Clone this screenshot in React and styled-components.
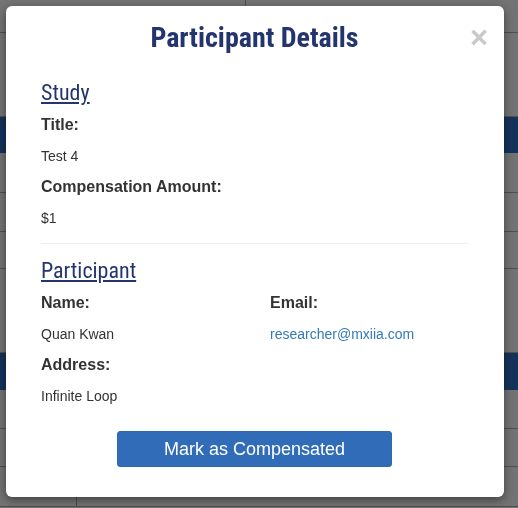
import React from 'react';
import styled, { createGlobalStyle } from 'styled-components';

const GlobalStyle = createGlobalStyle`
  html, body {
    margin: 0;
    padding: 0;
    background: #737373;
  }
  * {
    box-sizing: border-box;
  }
`;

// rows of the table page that sits under the dimmed overlay
const bgRows = [
  { h: 33, split: 246 },
  { h: 84 },
  { h: 36, band: true },
  { h: 40 },
  { h: 39 },
  { h: 37 },
  { h: 84 },
  { h: 37, band: true },
  { h: 39 },
  { h: 38 },
  { h: 40, split: 77 },
];

const App = () => {
  return (
    <>
      <GlobalStyle />
      <Page>
        {bgRows.map((row, i) => (
          <BgRow key={i} $h={row.h} $band={row.band}>
            {row.split && <BgCell style={{ width: row.split }} />}
          </BgRow>
        ))}
      </Page>

      <Modal>
        <Close aria-label="Close">×</Close>
        <Title>Participant Details</Title>

        <Body>
          <SectionHeading>Study</SectionHeading>
          <Label>Title:</Label>
          <Value>Test 4</Value>
          <Label>Compensation Amount:</Label>
          <Value>$1</Value>

          <Divider />

          <SectionHeading>Participant</SectionHeading>
          <Grid>
            <div>
              <Label>Name:</Label>
              <Value>Quan Kwan</Value>
            </div>
            <div>
              <Label>Email:</Label>
              <Value>
                <EmailLink href="#">researcher@mxiia.com</EmailLink>
              </Value>
            </div>
            <div>
              <Label>Address:</Label>
              <Value>Infinite Loop</Value>
            </div>
          </Grid>

          <Footer>
            <PrimaryButton>Mark as Compensated</PrimaryButton>
          </Footer>
        </Body>
      </Modal>
    </>
  );
};

const Page = styled.div`
  display: flex;
  flex-direction: column;
  height: 508px;
  overflow: hidden;
`;

const BgRow = styled.div`
  display: flex;
  flex: none;
  height: ${(p) => p.$h}px;
  background: ${(p) => (p.$band ? '#15325a' : 'transparent')};
  border-bottom: ${(p) => (p.$band ? 'none' : '1px solid #4f4f4f')};
`;

const BgCell = styled.div`
  border-right: 1px solid #4f4f4f;
`;

const Modal = styled.div`
  position: fixed;
  top: 6px;
  left: 6px;
  width: 498px;
  height: 491px;
  background: #fff;
  border-radius: 6px;
  box-shadow: 0 3px 10px rgba(0, 0, 0, 0.45);
  padding: 17px 36px 30px 35px;
  font-family: "Liberation Sans", Arial, sans-serif;
  color: #333;
`;

const Close = styled.button`
  position: absolute;
  top: 16px;
  right: 16px;
  padding: 0;
  border: 0;
  background: none;
  font-family: "Liberation Sans", Arial, sans-serif;
  font-size: 31px;
  font-weight: bold;
  line-height: 1;
  color: #c9c9c9;
  cursor: pointer;
`;

const Title = styled.h4`
  margin: 0;
  text-align: center;
  font-family: "Roboto Condensed", "Liberation Sans Narrow", Roboto, sans-serif;
  font-size: 28px;
  font-weight: 700;
  line-height: 1.1;
  color: #24346f;
`;

const Body = styled.div`
  display: flex;
  flex-direction: column;
  margin-top: 27px;
`;

const SectionHeading = styled.h5`
  align-self: flex-start;
  margin: 0 0 10px;
  font-family: "Roboto Condensed", "Liberation Sans Narrow", Roboto, sans-serif;
  font-size: 22px;
  font-weight: 400;
  line-height: 1.1;
  color: #24346f;
  text-decoration: underline;
  text-decoration-thickness: 2px;
  text-underline-offset: 2px;
`;

const Label = styled.div`
  font-size: 16px;
  font-weight: bold;
  line-height: 20px;
  margin-bottom: 11px;
`;

const Value = styled.div`
  font-size: 14px;
  line-height: 20px;
  margin-bottom: 11px;
`;

const EmailLink = styled.a`
  color: #337ab7;
  text-decoration: none;
`;

const Divider = styled.hr`
  width: 100%;
  margin: 4px 0 15px;
  border: 0;
  border-top: 1px solid #eee;
`;

const Grid = styled.div`
  display: grid;
  grid-template-columns: 229px 1fr;
`;

const Footer = styled.div`
  display: flex;
  justify-content: center;
  margin-top: 14px;
`;

const PrimaryButton = styled.button`
  width: 275px;
  height: 36px;
  border: 1px solid #2e6da4;
  border-radius: 3px;
  background: #306cb8;
  color: #fff;
  font-family: "Liberation Sans", Arial, sans-serif;
  font-size: 18px;
  cursor: pointer;
`;

export default App;
